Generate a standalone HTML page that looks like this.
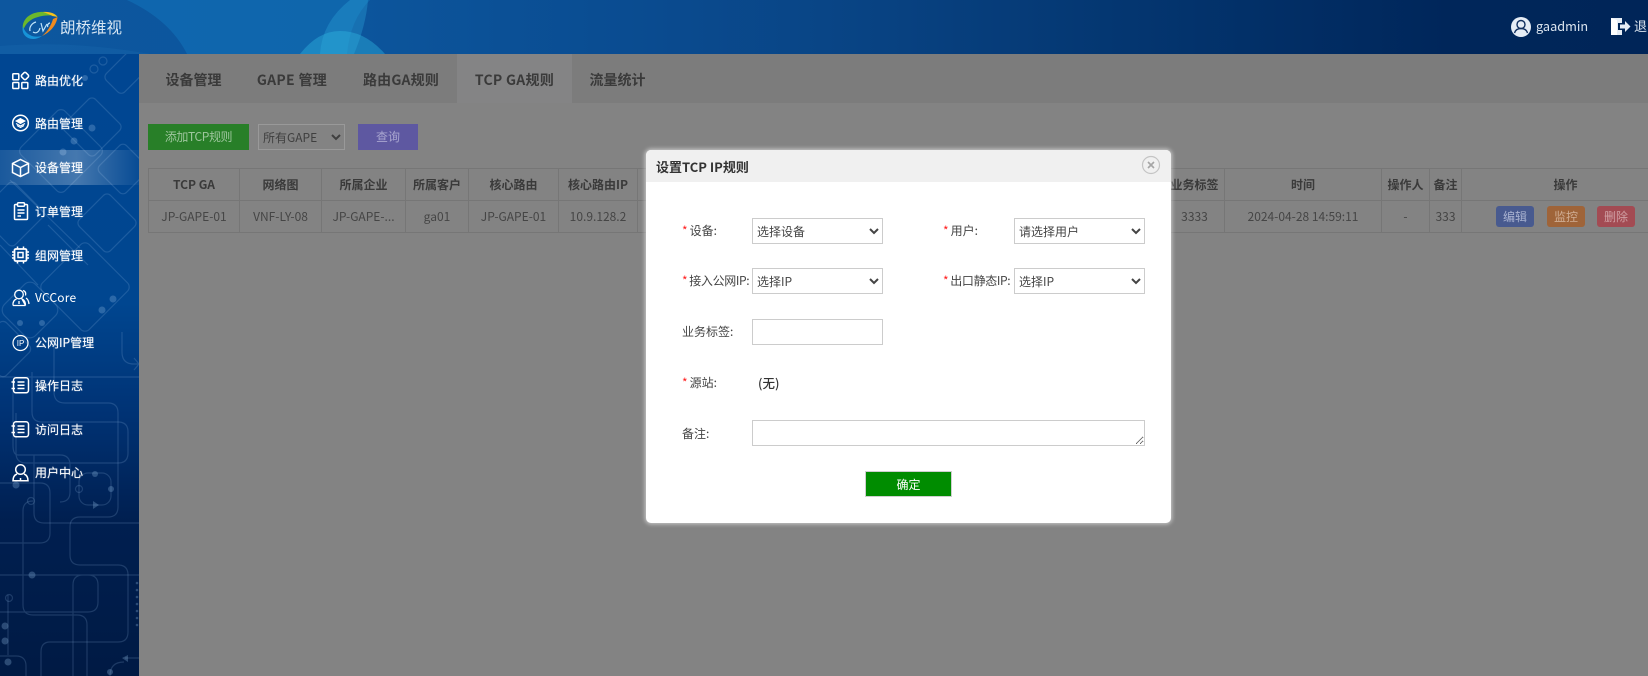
<!DOCTYPE html>
<html lang="zh"><head><meta charset="utf-8"><title>朗桥维视</title>
<style>
*{box-sizing:border-box}
html,body{margin:0;padding:0;width:1648px;height:676px;overflow:hidden;background:#838383;font-family:"Noto Sans CJK SC","Liberation Sans",sans-serif;font-size:12px;color:#333}
#root{position:absolute;left:0;top:0;width:1648px;height:676px;overflow:hidden;background:#838383}
.abs{position:absolute}
#hd{left:0;top:0;width:1648px;height:54px;overflow:hidden;background:linear-gradient(90deg,#0d579f 0,#0c559c 22%,#0a4c91 38%,#094586 50%,#03336c 72%,#00265a 88%,#002558 100%)}
#side{left:0;top:54px;width:139px;height:622px;overflow:hidden;background:linear-gradient(180deg,#004692 0,#004690 40%,#003274 58%,#001f50 75%,#001a44 100%)}
.mi{position:absolute;left:0;width:139px;height:20px;line-height:20px;padding-left:35px;color:#fff;font-size:12px;text-shadow:0 0 1px rgba(255,255,255,.6)}
.ic{position:absolute;left:10px;width:20px;height:20px;fill:none;stroke:#fff;stroke-width:1.5}
#tabs{left:139px;top:54px;width:1509px;height:49px;background:#7c7c7c;display:flex;padding-left:9px;overflow:hidden}
#tabs div{height:49px;line-height:53px;font-size:14px;font-weight:700;color:#3a3a3a;white-space:nowrap;text-align:center}
#tabs div.on{background:#848485}
.btn{position:absolute;text-align:center;top:124px;height:26px;line-height:26px}
table{position:absolute;left:148px;top:168px;width:1521px;border-collapse:collapse;table-layout:fixed}
th,td{border:1px solid #767676;height:32px;padding:0;text-align:center;overflow:hidden;white-space:nowrap;font-size:12px}
th{color:#3a3a3a;font-weight:700;height:32px}
td{color:#454545}
.ob{display:inline-block;width:38px;height:21px;line-height:21px;border-radius:3px;vertical-align:middle;font-size:12px}
#modal{left:646px;top:150px;width:525px;height:373px;background:#fff;border-radius:5px;box-shadow:0 0 4px 1px rgba(255,255,255,.6);overflow:hidden}
#mh{height:32px;line-height:34px;background:#f0f0f0;padding-left:10px;font-size:13px;font-weight:700;color:#333}
.lb{position:absolute;font-size:12px;color:#444;height:26px;line-height:26px;white-space:nowrap}
.lb b{color:#f22;font-weight:400;margin-right:2px}
.tight{letter-spacing:-.35px}
select.f{position:absolute;width:131px;height:26px;border:1px solid #ccc;background:#fff;font-family:inherit;font-size:12px;color:#444;padding:0;border-radius:0;outline:0}
#ok{position:absolute;left:219px;top:321px;width:87px;height:26px;background:#008c00;border:1px solid #cfcfcf;color:#fff;text-align:center;line-height:25px;font-size:12px}
</style></head><body>
<div id="root">

<div id="hd" class="abs">
<svg width="1648" height="54" style="position:absolute;left:0;top:0">
<path d="M0 54V46Q70 40 150 54Z" fill="#2a84c6" opacity=".14"/>
<path d="M127 0Q170 20 187 54H347Q350 20 370 0Z" fill="#1588cf" opacity=".33"/>
<path d="M350 0Q322 22 320 54H354Q366 25 368 0Z" fill="#2aa0d8" opacity=".38"/>
<path d="M300 54Q318 31 340 31Q365 31 385 54Z" fill="#2fb4e0" opacity=".42"/>
</svg>
<svg width="40" height="30" viewBox="0 0 40 30" style="position:absolute;left:20px;top:11px" fill="none">
<path d="M3 20C1 10 8 2 20 1c7-.5 13 1 17 4-6-1-13-1-19 1C10 8 5 13 3 20z" fill="#6cb82c"/>
<path d="M23 1c6-.6 12 1 14.500 5l-5-1c-3-1.500-6-3-9.500-4z" fill="#f4c21c"/>
<path d="M37.500 6c-1 8-7 15-15.500 19 5-4 9-10 11-17z" fill="#ef8a1e"/>
<path d="M3 15c-2 7 3 13 10 13 3 0 6-1 9-3-5 1-9 1-12-1-4-2-6-5-7-9z" fill="#1793d8"/>
<path d="M10 20c-1-4 2-8 6-9M13 21c3 2 6 0 7-4M21 12l2 8 4-7M30 12c-2 0-3 3-2 4" stroke="#bfe4fa" stroke-width="1.200"/>
</svg>
<div class="abs" style="left:60px;top:14px;font-size:15.5px;line-height:26px;color:#d7e6f3;white-space:nowrap">朗桥维视</div>
<svg width="22" height="22" viewBox="0 0 22 22" style="position:absolute;left:1510px;top:16px">
<circle cx="11" cy="11" r="10" fill="#e6edf5"/>
<circle cx="11" cy="8.500" r="4" fill="none" stroke="#12305f" stroke-width="1.400"/>
<path d="M4.500 17c1-3.500 3.500-4.500 6.500-4.500s5.500 1 6.500 4.500" fill="none" stroke="#12305f" stroke-width="1.400"/>
</svg>
<div class="abs" style="left:1536px;top:15px;font-size:12.7px;line-height:22px;color:#dce6f0">gaadmin</div>
<svg width="21" height="19" viewBox="0 0 21 19" style="position:absolute;left:1610px;top:17px">
<path d="M1 1h11v5H8v7h4v5H1z" fill="#e6edf5"/><path d="M1 1l6 2v15l-6 0z" fill="#fff"/>
<path d="M10 7.500h5V4l5.500 5.500L15 15v-3.500h-5z" fill="#e6edf5"/>
</svg>
<div class="abs" style="left:1634px;top:15px;font-size:13px;line-height:22px;color:#dce6f0;white-space:nowrap">退出</div>
</div>

<div id="side" class="abs">
<svg width="139" height="622" viewBox="0 54 139 622" style="position:absolute;left:0;top:0" fill="none" stroke="#8fb8e0" stroke-opacity=".2" stroke-width="1.200">
<rect x="112" y="55" width="26" height="44" rx="5" transform="rotate(45 134 77)"/>
<rect x="70" y="105" width="44" height="44" rx="5" transform="rotate(45 92 127)"/>
<rect x="30" y="120" width="62" height="62" rx="6" transform="rotate(45 61 151)"/>
<rect x="104" y="150" width="38" height="38" rx="5" transform="rotate(45 123 169)"/>
<rect x="85" y="201" width="44" height="44" rx="5" transform="rotate(45 107 223)"/>
<rect x="-12" y="190" width="48" height="48" rx="5" transform="rotate(45 12 214)"/>
<rect x="52" y="254" width="66" height="66" rx="6" transform="rotate(45 85 287)"/>
<rect x="8" y="288" width="44" height="44" rx="8" transform="rotate(45 30 310)"/>
<rect x="-18" y="328" width="42" height="42" rx="5" transform="rotate(45 3 349)"/>
<path d="M10 180l70 68M48 225l40 40M0 245l38 40"/>
<circle cx="94" cy="69" r="4"/><circle cx="103" cy="61" r="4"/>
<path d="M54 340v52q0 11 11 11h43q10 0 10 10v94q0 10-10 10H80q-10 0-10 10v28q0 10 10 10h38q10 0 10 10v57q0 10-10 10H50q-9 0-9 10v24"/>
<path d="M0 377h139M32 372v40q0 10 10 10h76q10 0 10 10v21q0 10-10 10H26q-10 0-10-10v-40M13 390v55q0 10 5 10H60q10 0 10 10v27q0 10-10 10M34 455v58q0 10 10 10h95"/>
<path d="M0 483h40q10 0 10 10v40q0 10-10 10H0M33 501q-10 0-10 10v94q0 10 10 10h44q10 0 10 10v51M73 676V585q0-10 10-10h5q10 0 10 10v17q0 10-10 10H0M0 575h139"/>
<path d="M8 595v60M0 656h16q10 0 10 10v10M110 676q0-14 14-14M139 658h-14M122 332v20q0 12 12 12h5M134 358l5 6-5 6"/>
<rect x="79" y="473" width="32" height="32" rx="9"/><circle cx="79" cy="489" r="3.500"/>
<circle cx="31" cy="501" r="3.500"/><circle cx="9" cy="598" r="3.500"/>
<g fill="#8fb8e0" fill-opacity=".3" stroke="none">
<circle cx="85" cy="78" r="3"/><circle cx="92" cy="128" r="3.500"/><circle cx="74" cy="141" r="3.500"/><circle cx="63" cy="152" r="3.500"/>
<circle cx="113" cy="299" r="3.500"/><circle cx="102" cy="310" r="3.500"/><circle cx="20" cy="323" r="3"/><circle cx="42" cy="323" r="3"/>
<circle cx="95" cy="474" r="3"/><circle cx="111" cy="489" r="3"/><circle cx="16" cy="485" r="3.500"/><circle cx="32" cy="575" r="3.500"/><circle cx="5" cy="626" r="3.500"/><circle cx="5" cy="641" r="3.500"/><circle cx="8" cy="662" r="3.500"/><circle cx="110" cy="672" r="3"/>
<path d="M93 501l6 4-6 4zM122 658l6-3v7z"/>
<circle cx="137" cy="583" r="1.300"/><circle cx="137" cy="590" r="1.300"/><circle cx="137" cy="597" r="1.300"/><circle cx="137" cy="604" r="1.300"/><circle cx="137" cy="611" r="1.300"/><circle cx="137" cy="618" r="1.300"/><circle cx="137" cy="625" r="1.300"/>
</g></svg>

<div class="abs" style="left:0;top:96px;width:139px;height:35px;background:linear-gradient(90deg,rgba(255,255,255,.1) 0,rgba(255,255,255,.27) 55%,rgba(255,255,255,.03) 100%)"></div>

<svg class="ic" viewBox="0 0 20 20" style="top:17px"><rect x="2.800" y="2.800" width="6" height="6" rx=".8"/><rect x="12" y="2" width="6" height="6" rx="1.500" transform="rotate(45 15 5)"/><rect x="2.800" y="11.500" width="6" height="6" rx=".8"/><rect x="11.800" y="11.500" width="6" height="6" rx=".8"/></svg>
<div class="mi" style="top:17px">路由优化</div>

<svg class="ic" viewBox="0 0 20 20" style="top:59px"><circle cx="10.500" cy="10" r="7.800"/><path d="M10.500 5.500l4.500 2.500-4.500 2.500L6 8z" fill="#fff" stroke-width="1"/><path d="M6 10.500l4.500 2.500 4.500-2.500M7 12.500l3.500 2 3.500-2" stroke-width="1.100"/></svg>
<div class="mi" style="top:60px">路由管理</div>

<svg class="ic" viewBox="0 0 20 20" style="top:104px"><path d="M10.500 1.500l8 4v9l-8 4-8-4v-9zM2.500 5.500l8 4 8-4M10.500 9.500v9"/></svg>
<div class="mi" style="top:104px;">设备管理</div>

<svg class="ic" viewBox="0 0 20 20" style="top:147px"><path d="M7 3.500H5.500q-1 0-1 1v13q0 1 1 1h11q1 0 1-1v-13q0-1-1-1H15"/><rect x="7.500" y="1.800" width="7" height="3.400" rx="1"/><path d="M7.500 9h7M7.500 12h7M7.500 15h3.500"/></svg>
<div class="mi" style="top:148px">订单管理</div>

<svg class="ic" viewBox="0 0 20 20" style="top:191px"><rect x="4.500" y="4" width="12" height="12" rx="1.200" stroke-width="1.800"/><rect x="8" y="7.500" width="5" height="5" stroke-width="1.500"/><path d="M2 7h2.500M2 10h2.500M2 13h2.500M16.500 7H19M16.500 10H19M16.500 13H19M7.500 1.500V4M13.500 1.500V4M7.500 16v2.500M13.500 16v2.500" stroke-width="1.500"/></svg>
<div class="mi" style="top:192px">组网管理</div>

<svg class="ic" viewBox="0 0 20 20" style="top:234px;stroke-width:1.300"><circle cx="9" cy="6.500" r="4.300"/><path d="M3 17.500q-.5-5 3.500-6.500M12 11q3.500 1.500 3.500 6.500zM3 17.500h12.500M13 2.500q3.500 1 2.500 5M16 10q2.500 1.500 3 6M9 13v3"/></svg>
<div class="mi" style="top:234px;letter-spacing:.2px;text-shadow:none">VCCore</div>

<svg class="ic" viewBox="0 0 20 20" style="top:279px"><circle cx="10.500" cy="10" r="7.500" stroke-width="1.200"/><text x="10.500" y="13" text-anchor="middle" font-size="8" fill="#fff" stroke="none" font-family="Liberation Sans">IP</text></svg>
<div class="mi" style="top:279px">公网IP管理</div>

<svg class="ic" viewBox="0 0 20 20" style="top:321px"><rect x="3.500" y="2.800" width="15" height="15" rx="2.500"/><path d="M7.500 7h7M7.500 10.300h7M7.500 13.500h7M1.500 7h3.500M1.500 13.500h3.500"/></svg>
<div class="mi" style="top:322px">操作日志</div>

<svg class="ic" viewBox="0 0 20 20" style="top:365px"><rect x="3.500" y="2.800" width="15" height="15" rx="2.500"/><path d="M7.500 7h7M7.500 10.300h7M7.500 13.500h7M1.500 7h3.500M1.500 13.500h3.500"/></svg>
<div class="mi" style="top:366px">访问日志</div>

<svg class="ic" viewBox="0 0 20 20" style="top:409px"><circle cx="10.500" cy="6.500" r="4.800"/><path d="M7 11q-4 1.500-4 6.800h15q0-5.300-4-6.800M10.500 15v3"/></svg>
<div class="mi" style="top:409px">用户中心</div>
</div>

<div id="tabs" class="abs"><div style="width:91px">设备管理</div><div style="width:106px;letter-spacing:.3px">GAPE 管理</div><div style="width:112px;letter-spacing:.2px">路由GA规则</div><div class="on" style="width:115px;letter-spacing:.3px">TCP GA规则</div><div style="width:91px">流量统计</div></div>

<div class="btn" style="left:148px;width:101px;background:#287f28;color:#9ec69d;letter-spacing:-.4px">添加TCP规则</div>
<select class="abs" style="left:258px;top:124px;width:87px;height:26px;background:#838383;border:1px solid #999;color:#3f3f3f;font-family:inherit;font-size:12px;border-radius:0;padding:0"><option>所有GAPE</option></select>
<div class="btn" style="left:358px;width:60px;background:#5e58a1;color:#a8a5cf">查询</div>

<table>
<colgroup><col style="width:91px"><col style="width:82px"><col style="width:84px"><col style="width:63px"><col style="width:90px"><col style="width:79px"><col style="width:527px"><col style="width:60px"><col style="width:157px"><col style="width:48px"><col style="width:32px"><col style="width:208px"></colgroup>
<tr><th>TCP GA</th><th>网络图</th><th>所属企业</th><th>所属客户</th><th>核心路由</th><th>核心路由IP</th><th></th><th>业务标签</th><th>时间</th><th>操作人</th><th>备注</th><th>操作</th></tr>
<tr><td>JP-GAPE-01</td><td>VNF-LY-08</td><td>JP-GAPE-...</td><td>ga01</td><td>JP-GAPE-01</td><td>10.9.128.2</td><td></td><td>3333</td><td>2024-04-28 14:59:11</td><td>-</td><td>333</td><td><span class="ob" style="background:#485a8f;color:#a9b2d0">编辑</span><span class="ob" style="background:#9f6439;color:#d0ae95;margin:0 12px 0 13px">监控</span><span class="ob" style="background:#a34b53;color:#d0a0a4">删除</span></td></tr>
</table>

<div id="modal" class="abs">
<div id="mh">设置TCP IP规则</div>
<svg width="20" height="20" viewBox="0 0 20 20" style="position:absolute;left:495px;top:5px" fill="none"><circle cx="10" cy="10" r="8.500" stroke="#c4c4c4" stroke-width="1.200"/><path d="M7 7l6 6M13 7l-6 6" stroke="#a5a5a5" stroke-width="1.600"/></svg>

<div class="lb" style="left:36px;top:68px"><b>*</b>设备:</div>
<select class="f" style="left:106px;top:68px"><option>选择设备</option></select>
<div class="lb" style="left:297px;top:68px"><b>*</b>用户:</div>
<select class="f" style="left:368px;top:68px"><option>请选择用户</option></select>

<div class="lb tight" style="left:36px;top:118px"><b>*</b>接入公网IP:</div>
<select class="f" style="left:106px;top:118px"><option>选择IP</option></select>
<div class="lb tight" style="left:297px;top:118px"><b>*</b>出口静态IP:</div>
<select class="f" style="left:368px;top:118px"><option>选择IP</option></select>

<div class="lb" style="left:36px;top:169px">业务标签:</div>
<input class="abs" style="left:106px;top:169px;width:131px;height:26px;border:1px solid #ccc;outline:0;background:#fff" type="text">

<div class="lb" style="left:36px;top:220px"><b>*</b>源站:</div>
<div class="lb" style="left:112px;top:220px;color:#333;font-size:12.5px;font-weight:500">(无)</div>

<div class="lb" style="left:36px;top:271px">备注:</div>
<textarea class="abs" style="left:106px;top:270px;width:393px;height:26px;border:1px solid #ccc;outline:0;background:#fff;padding:0;margin:0"></textarea>

<div id="ok">确定</div>
</div>
</div>
</body></html>
